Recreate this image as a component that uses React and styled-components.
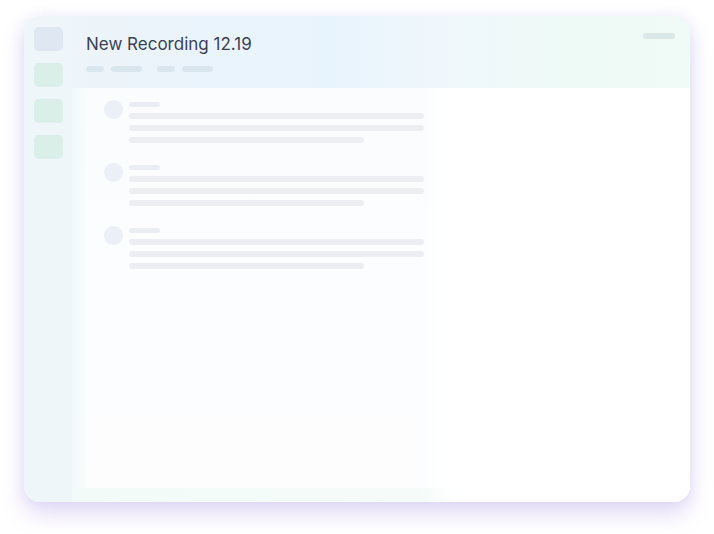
import React from "react";
import styled, { createGlobalStyle } from "styled-components";

const GlobalStyle = createGlobalStyle`
  html, body {
    margin: 0;
    padding: 0;
    background: #ffffff;
  }
  body {
    font-family: Inter, "Noto Sans", "Liberation Sans", sans-serif;
  }
`;

const Stage = styled.div`
  width: 714px;
  height: 534px;
  box-sizing: border-box;
  padding: 16px 24px 32px 24px;
`;

const Card = styled.div`
  display: flex;
  width: 666px;
  height: 486px;
  border-radius: 16px;
  overflow: hidden;
  background: #ffffff;
  box-shadow: 0 12px 22px rgba(145, 115, 225, 0.26),
    0 0 14px rgba(175, 160, 235, 0.16);
`;

const Sidebar = styled.div`
  display: flex;
  flex-direction: column;
  gap: 12px;
  width: 48px;
  box-sizing: border-box;
  padding: 11px 10px;
  background: #eef6f9;
`;

const NavTile = styled.div`
  width: 29px;
  height: 24px;
  border-radius: 5px;
  filter: blur(0.5px);
  background: ${(props) => (props.active ? "#dfe8f2" : "#d9efe7")};
`;

const Main = styled.div`
  flex: 1;
  display: flex;
  flex-direction: column;
`;

const Header = styled.div`
  height: 72px;
  box-sizing: border-box;
  padding: 17px 15px 0 14px;
  background: linear-gradient(
    90deg,
    #edf4fa 0%,
    #e8f4fd 42%,
    #eff7fb 60%,
    #eefaf6 80%,
    #f0faf6 100%
  );
`;

const TitleRow = styled.div`
  display: flex;
  justify-content: space-between;
  align-items: flex-start;
`;

const Title = styled.h1`
  margin: 0;
  font-size: 17px;
  line-height: 22px;
  font-weight: 400;
  color: #3c4254;
`;

const CornerPill = styled.div`
  width: 32px;
  height: 6px;
  border-radius: 3px;
  filter: blur(0.6px);
  background: #dae9e8;
`;

const MetaRow = styled.div`
  display: flex;
  gap: 7px;
  margin-top: 11px;
`;

const MetaGroup = styled.div`
  display: flex;
  gap: 7px;
  margin-right: 8px;
`;

const MetaPill = styled.div`
  width: ${(props) => props.w}px;
  height: 6px;
  border-radius: 3px;
  filter: blur(0.6px);
  background: #dae6ee;
`;

const Body = styled.div`
  flex: 1;
  display: flex;
  padding: 0 0 14px 0;
  background: linear-gradient(
    90deg,
    #f3fbf8 0%,
    #f4fbf9 56%,
    #ffffff 62%
  );
`;

const Gutter = styled.div`
  width: 14px;
  background: linear-gradient(90deg, #f1f9fa 0%, #f9fcfc 100%);
`;

const Panel = styled.div`
  display: flex;
  flex-direction: column;
  gap: 20px;
  width: 339px;
  box-sizing: border-box;
  padding: 12px 0 0 18px;
  background: linear-gradient(180deg, #fafcfe 0%, #fcfdfe 40%, #fdfdfe 100%);
`;

const Rest = styled.div`
  flex: 1;
  background: linear-gradient(90deg, #fcfdfe 0px, #ffffff 18px);
`;

const Row = styled.div`
  display: flex;
  gap: 6px;
  filter: blur(0.6px);
`;

const Avatar = styled.div`
  flex: 0 0 19px;
  height: 19px;
  border-radius: 50%;
  background: #ebeff7;
`;

const Lines = styled.div`
  display: flex;
  flex-direction: column;
  gap: 6px;
  padding-top: 2px;
`;

const NamePill = styled.div`
  width: 31px;
  height: 5px;
  border-radius: 3px;
  background: #eaeef4;
`;

const Line = styled.div`
  width: ${(props) => props.w}px;
  height: 6px;
  border-radius: 3px;
  background: #eceef1;
`;

const rows = [0, 1, 2];

export default function App() {
  return (
    <>
      <GlobalStyle />
      <Stage>
        <Card>
          <Sidebar>
            <NavTile active />
            <NavTile />
            <NavTile />
            <NavTile />
          </Sidebar>
          <Main>
            <Header>
              <TitleRow>
                <Title>New Recording 12.19</Title>
                <CornerPill />
              </TitleRow>
              <MetaRow>
                <MetaGroup>
                  <MetaPill w={18} />
                  <MetaPill w={31} />
                </MetaGroup>
                <MetaGroup>
                  <MetaPill w={18} />
                  <MetaPill w={31} />
                </MetaGroup>
              </MetaRow>
            </Header>
            <Body>
              <Gutter />
              <Panel>
                {rows.map((r) => (
                  <Row key={r}>
                    <Avatar />
                    <Lines>
                      <NamePill />
                      <Line w={295} />
                      <Line w={295} />
                      <Line w={235} />
                    </Lines>
                  </Row>
                ))}
              </Panel>
              <Rest />
            </Body>
          </Main>
        </Card>
      </Stage>
    </>
  );
}
